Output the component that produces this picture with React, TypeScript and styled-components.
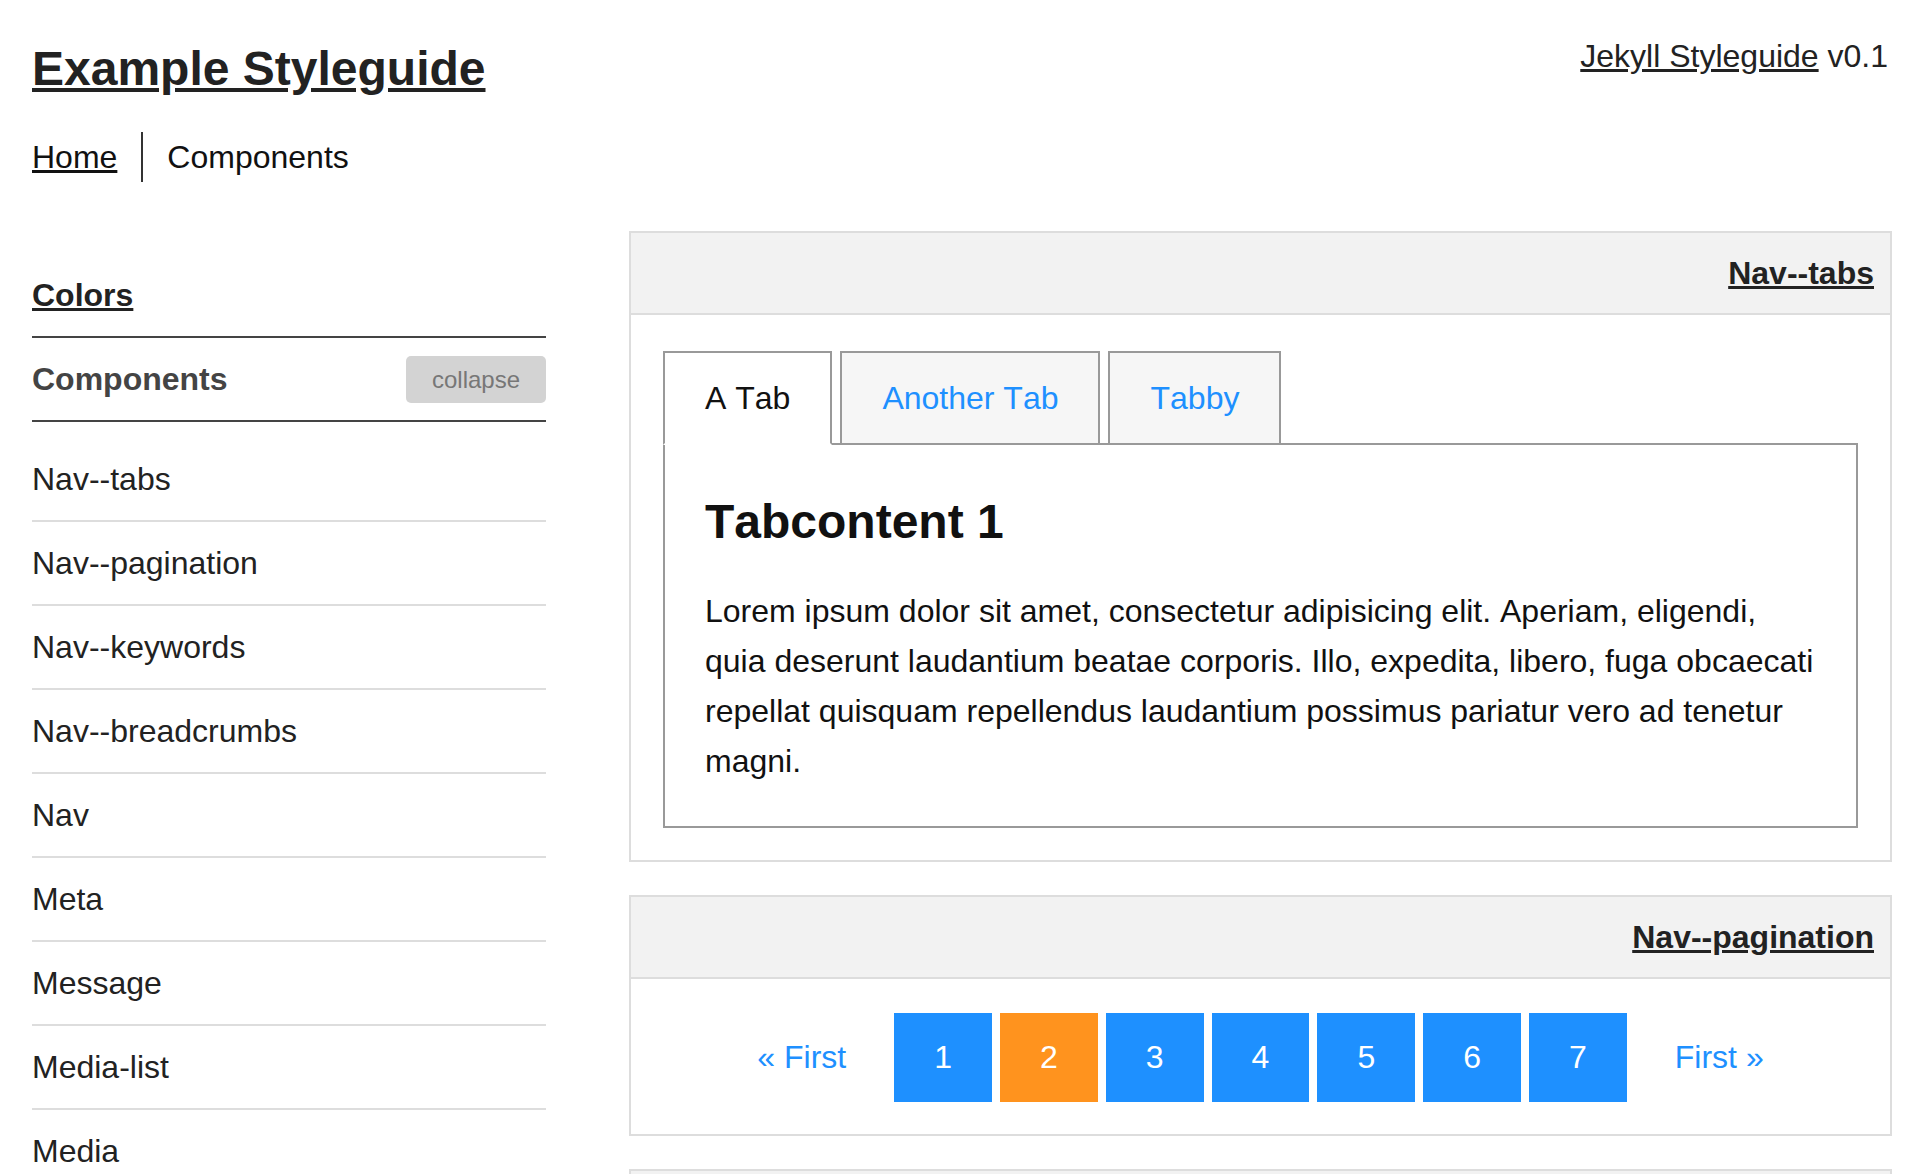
import React from "react";
import styled, { createGlobalStyle } from "styled-components";

const GlobalStyle = createGlobalStyle`
  html, body {
    margin: 0;
    padding: 0;
    background: #ffffff;
  }
  body {
    font-family: "Liberation Sans", Arial, Helvetica, sans-serif;
    color: #222222;
    font-size: 32px;
    font-kerning: none;
  }
  * { box-sizing: border-box; }
`;

const Page = styled.div`
  padding: 32px 32px 0 32px;
`;

const Header = styled.header`
  display: flex;
  justify-content: space-between;
  align-items: flex-start;
`;

const SiteTitle = styled.h1`
  margin: 0;
  font-size: 48px;
  line-height: 74px;
  font-weight: 700;
  color: #222222;
`;

const TextLink = styled.a`
  color: inherit;
  text-decoration: underline;
`;

const Version = styled.div`
  font-size: 32px;
  line-height: 48px;
  padding-right: 4px;
  color: #222222;
`;

const Breadcrumbs = styled.nav`
  display: flex;
  margin-top: 26px;
  font-size: 32px;
  line-height: 50px;
`;

const Crumb = styled.span<{ $sep?: boolean }>`
  padding: ${(p) => (p.$sep ? "0 24px" : "0 24px 0 0")};
  border-left: ${(p) => (p.$sep ? "2px solid #333333" : "none")};
  color: #111111;
`;

const Layout = styled.div`
  display: grid;
  grid-template-columns: 514px 1fr;
  column-gap: 83px;
  align-items: start;
  margin-top: 49px;
`;

const Sidebar = styled.aside`
  padding-top: 23px;
`;

const SideHeading = styled.div<{ $muted?: boolean }>`
  display: flex;
  justify-content: space-between;
  align-items: center;
  padding: 15px 0;
  line-height: 52px;
  font-size: 32px;
  font-weight: 700;
  color: ${(p) => (p.$muted ? "#444444" : "#222222")};
  border-bottom: 2px solid #444444;
`;

const CollapseButton = styled.button`
  height: 47px;
  width: 140px;
  border: none;
  border-radius: 5px;
  background: #d3d3d3;
  color: #777777;
  font-family: "Liberation Sans", Arial, sans-serif;
  font-size: 24px;
  line-height: 47px;
  padding: 0;
  cursor: pointer;
`;

const SideList = styled.ul`
  list-style: none;
  margin: 16px 0 0 0;
  padding: 0;
`;

const SideItem = styled.li`
  padding: 15px 0;
  line-height: 52px;
  font-size: 32px;
  color: #222222;
  border-bottom: 2px solid #dddddd;
`;

const Main = styled.main`
  display: flex;
  flex-direction: column;
  gap: 33px;
`;

const Panel = styled.section`
  border: 2px solid #dddddd;
`;

const PanelHeader = styled.div`
  background: #f2f2f2;
  border-bottom: 2px solid #dddddd;
  padding: 14px 16px;
  text-align: right;
  font-size: 32px;
  line-height: 52px;
  font-weight: 700;
  color: #222222;
`;

const PanelBody = styled.div`
  padding: 34px 32px 32px 32px;
`;

const TabList = styled.div`
  display: flex;
  gap: 8px;
  margin-top: 2px;
  position: relative;
  z-index: 1;
`;

const Tab = styled.a<{ $active?: boolean }>`
  display: block;
  padding: 19px 40px;
  line-height: 52px;
  font-size: 32px;
  text-decoration: none;
  border: 2px solid #999999;
  margin-bottom: -2px;
  background: ${(p) => (p.$active ? "#ffffff" : "#f6f6f6")};
  border-bottom-color: ${(p) => (p.$active ? "#ffffff" : "#999999")};
  color: ${(p) => (p.$active ? "#111111" : "#1e90ff")};
`;

const TabContent = styled.div`
  border: 2px solid #999999;
  padding: 40px 30px 40px 40px;
`;

const TabHeading = styled.h2`
  margin: 8px 0 35px 0;
  font-size: 48px;
  line-height: 58px;
  font-weight: 700;
  color: #111111;
`;

const Paragraph = styled.p`
  margin: 0;
  max-width: 1114px;
  font-size: 32px;
  line-height: 50px;
  color: #111111;
`;

const Pagination = styled.nav`
  display: flex;
  justify-content: center;
  gap: 8px;
`;

type PageKind = "text" | "page" | "current";

const PageLink = styled.a<{ $kind: PageKind }>`
  display: block;
  padding: 18px 40px;
  line-height: 53px;
  font-size: 32px;
  text-decoration: none;
  background: ${(p) =>
    p.$kind === "page" ? "#1e90ff" : p.$kind === "current" ? "#ff931e" : "transparent"};
  color: ${(p) => (p.$kind === "text" ? "#1e90ff" : "#ffffff")};
`;

const navItems = [
  "Nav--tabs",
  "Nav--pagination",
  "Nav--keywords",
  "Nav--breadcrumbs",
  "Nav",
  "Meta",
  "Message",
  "Media-list",
  "Media",
];

const tabs = ["A Tab", "Another Tab", "Tabby"];

export default function App() {
  return (
    <>
      <GlobalStyle />
      <Page>
        <Header>
          <SiteTitle>
            <TextLink href="#">Example Styleguide</TextLink>
          </SiteTitle>
          <Version>
            <TextLink href="#">Jekyll Styleguide</TextLink> v0.1
          </Version>
        </Header>
        <Breadcrumbs>
          <Crumb>
            <TextLink href="#">Home</TextLink>
          </Crumb>
          <Crumb $sep>Components</Crumb>
        </Breadcrumbs>
        <Layout>
          <Sidebar>
            <SideHeading>
              <TextLink href="#">Colors</TextLink>
            </SideHeading>
            <SideHeading $muted>
              <span>Components</span>
              <CollapseButton>collapse</CollapseButton>
            </SideHeading>
            <SideList>
              {navItems.map((n) => (
                <SideItem key={n}>{n}</SideItem>
              ))}
            </SideList>
          </Sidebar>
          <Main>
            <Panel>
              <PanelHeader>
                <TextLink href="#">Nav--tabs</TextLink>
              </PanelHeader>
              <PanelBody>
                <TabList>
                  {tabs.map((t, i) => (
                    <Tab key={t} href="#" $active={i === 0}>
                      {t}
                    </Tab>
                  ))}
                </TabList>
                <TabContent>
                  <TabHeading>Tabcontent 1</TabHeading>
                  <Paragraph>
                    Lorem ipsum dolor sit amet, consectetur adipisicing elit. Aperiam, eligendi,
                    quia deserunt laudantium beatae corporis. Illo, expedita, libero, fuga
                    obcaecati repellat quisquam repellendus laudantium possimus pariatur vero ad
                    tenetur magni.
                  </Paragraph>
                </TabContent>
              </PanelBody>
            </Panel>
            <Panel>
              <PanelHeader>
                <TextLink href="#">Nav--pagination</TextLink>
              </PanelHeader>
              <PanelBody>
                <Pagination>
                  <PageLink href="#" $kind="text">« First</PageLink>
                  {[1, 2, 3, 4, 5, 6, 7].map((n) => (
                    <PageLink key={n} href="#" $kind={n === 2 ? "current" : "page"}>
                      {n}
                    </PageLink>
                  ))}
                  <PageLink href="#" $kind="text">First »</PageLink>
                </Pagination>
              </PanelBody>
            </Panel>
            <Panel>
              <PanelHeader>
                <TextLink href="#">Nav--keywords</TextLink>
              </PanelHeader>
              <PanelBody />
            </Panel>
          </Main>
        </Layout>
      </Page>
    </>
  );
}
